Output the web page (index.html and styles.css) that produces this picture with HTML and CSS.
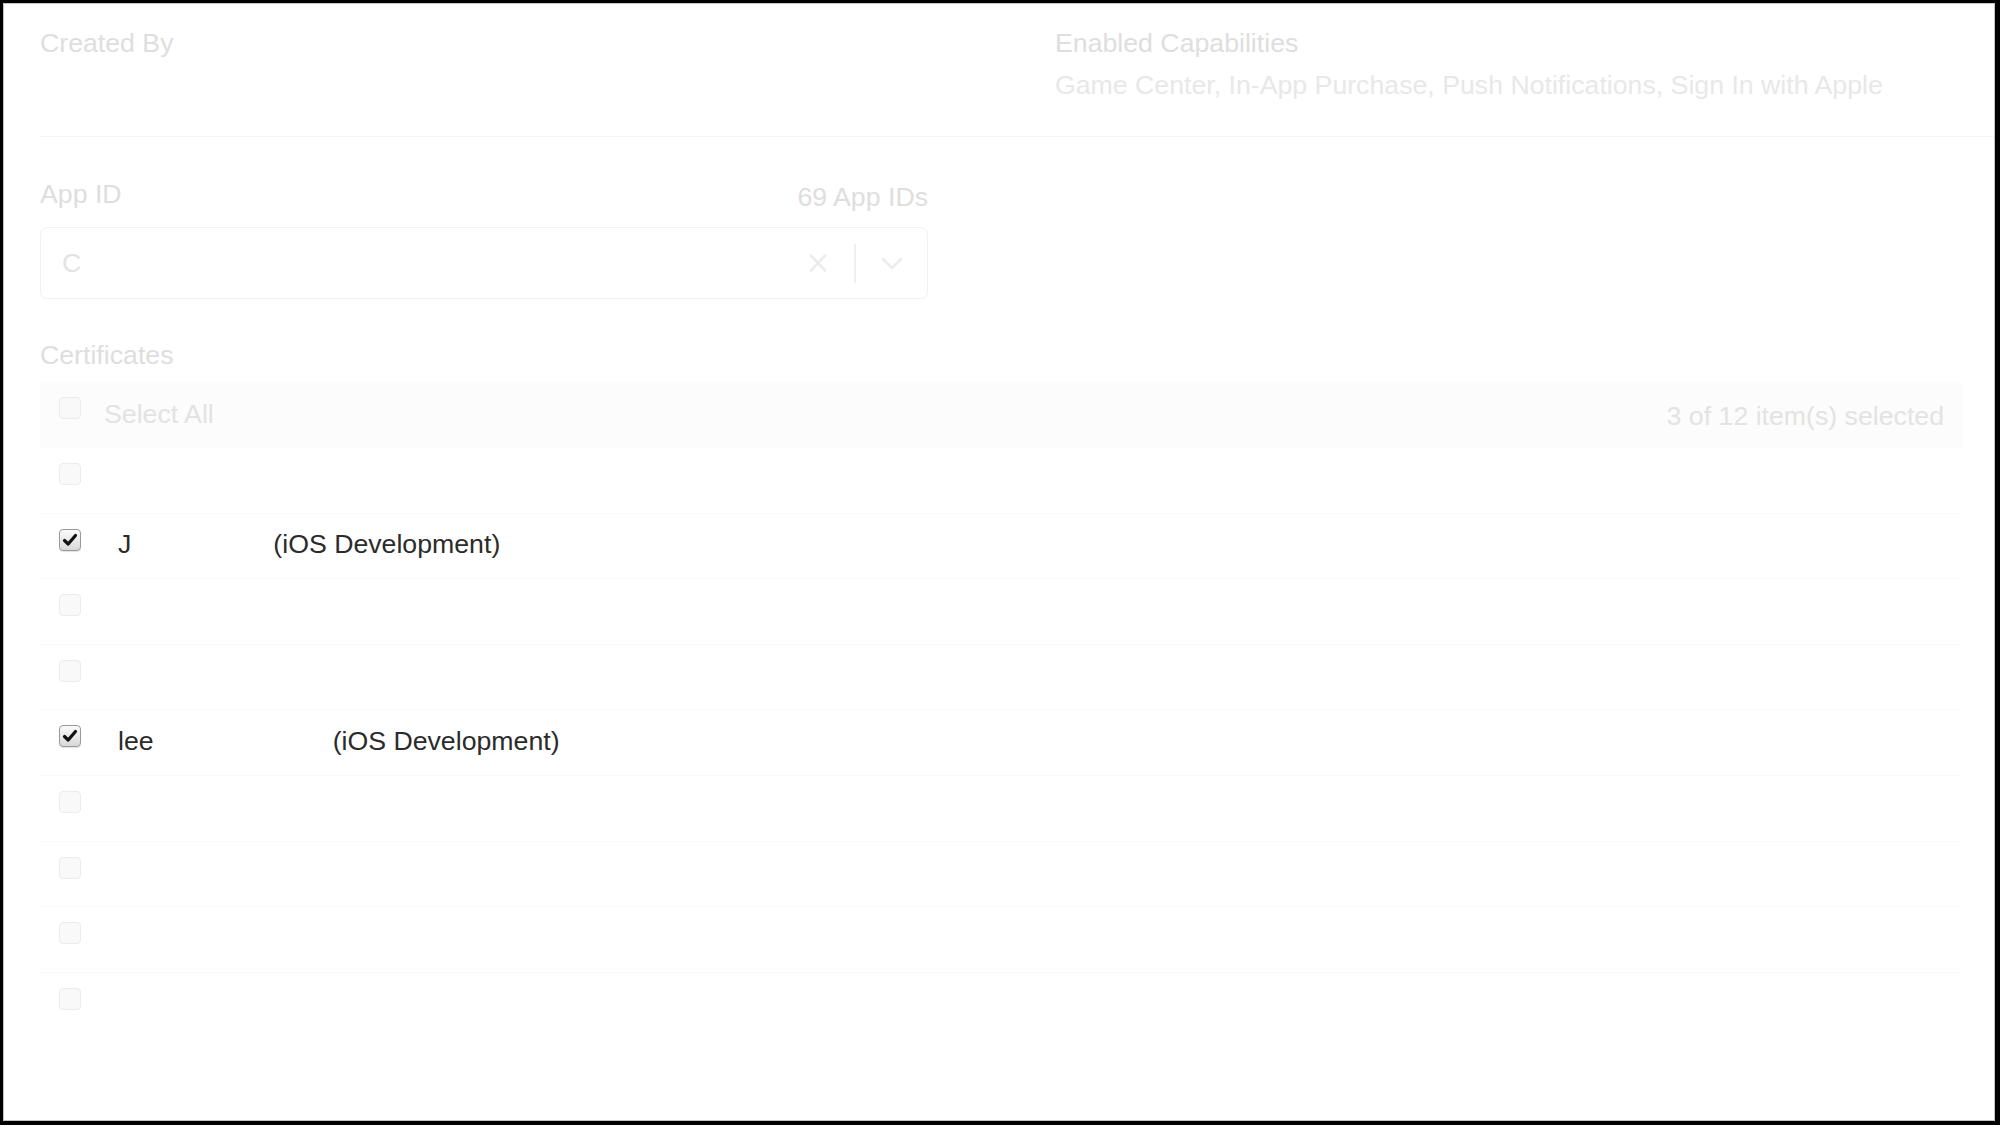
FILE: index.html
```html
<!DOCTYPE html>
<html lang="en">
<head>
  <meta charset="UTF-8" />
  <meta name="viewport" content="width=device-width, initial-scale=1.0" />
  <title>Edit Provisioning Profile</title>
  <link rel="stylesheet" href="styles.css">
</head>
<body>
  <div class="frame">
    <div class="details">
      <div class="field">
        <div class="field-label">Created By</div>
        <div class="field-value"></div>
      </div>
      <div class="field">
        <div class="field-label">Enabled Capabilities</div>
        <div class="field-value">Game Center, In-App Purchase, Push Notifications, Sign In with Apple</div>
      </div>
    </div>

    <div class="form">
      <div class="form-group app-id">
        <div class="label-row">
          <span class="field-label">App ID</span>
          <span class="count">69 App IDs</span>
        </div>
        <div class="select">
          <span class="select-value">C</span>
          <div class="select-actions">
            <svg class="clear" width="18" height="20" viewBox="0 0 18 20">
              <path d="M2 2.5 L16 17.5 M16 2.5 L2 17.5" stroke="#ececec" stroke-width="2.6" stroke-linecap="round" fill="none"/>
            </svg>
            <span class="sep"></span>
            <svg class="arrow" width="22" height="13" viewBox="0 0 22 13">
              <path d="M2 2 L11 11 L20 2" stroke="#ededed" stroke-width="2.8" stroke-linecap="round" stroke-linejoin="round" fill="none"/>
            </svg>
          </div>
        </div>
      </div>

      <div class="form-group">
        <div class="field-label">Certificates</div>
        <div class="cert-list">
          <div class="cert-header">
            <span class="box"></span>
            <span class="select-all">Select All</span>
            <span class="selected-count">3 of 12 item(s) selected</span>
          </div>
          <div class="cert-row"><span class="box"></span></div>
          <div class="cert-row">
            <span class="box checked">
              <svg width="16" height="14" viewBox="0 0 16 14"><path d="M2.5 7.5 L6.2 11 L13.5 2.5" stroke="#111" stroke-width="3.2" stroke-linecap="round" stroke-linejoin="round" fill="none"/></svg>
            </span>
            <span class="cert-name">J</span>
            <span class="cert-type short">(iOS Development)</span>
          </div>
          <div class="cert-row"><span class="box"></span></div>
          <div class="cert-row"><span class="box"></span></div>
          <div class="cert-row">
            <span class="box checked">
              <svg width="16" height="14" viewBox="0 0 16 14"><path d="M2.5 7.5 L6.2 11 L13.5 2.5" stroke="#111" stroke-width="3.2" stroke-linecap="round" stroke-linejoin="round" fill="none"/></svg>
            </span>
            <span class="cert-name">lee</span>
            <span class="cert-type long">(iOS Development)</span>
          </div>
          <div class="cert-row"><span class="box"></span></div>
          <div class="cert-row"><span class="box"></span></div>
          <div class="cert-row"><span class="box"></span></div>
          <div class="cert-row"><span class="box"></span></div>
        </div>
      </div>
    </div>
  </div>
</body>
</html>
```

FILE: styles.css
```css
:root {
  --label: #dedede;
  --muted: #e8e8e8;
  --text: #2b2b2b;
  --line: #f9f9f9;
}

* {
  box-sizing: border-box;
}

body {
  margin: 0;
  padding: 0;
  background: #000;
  font-family: 'Liberation Sans', Arial, sans-serif;
  font-size: 26.7px;
  line-height: 32px;
  color: var(--text);
}

.frame {
  margin: 3px 5px 4px 3px;
  height: 1118px;
  background: #fff;
  border: 1px solid #c4c4c4;
  overflow: hidden;
}

.details {
  margin-left: 36px;
  padding: 22.5px 0 35.5px;
  border-bottom: 1px solid #f5f5f5;
  display: grid;
  grid-template-columns: 1015px 1fr;
}

.field-label {
  color: var(--label);
}

.field-value {
  margin-top: 10px;
  min-height: 32px;
  color: var(--muted);
}

.form {
  padding-left: 36px;
}

.form-group {
  margin-top: 40px;
}

.app-id {
  margin-top: 41px;
  width: 888px;
}

.label-row {
  height: 32px;
  display: flex;
  justify-content: space-between;
  align-items: flex-start;
}

.count {
  margin-top: 3px;
  color: var(--label);
}

.select {
  margin-top: 17px;
  height: 72px;
  border: 1px solid #f2f2f2;
  border-radius: 7px;
  display: flex;
  align-items: center;
  padding: 0 24px 0 21px;
}

.select-value {
  flex: 1;
  color: #e3e3e3;
}

.select-actions {
  display: flex;
  align-items: center;
}

.clear {
  display: block;
  margin-right: 27px;
}

.sep {
  width: 2px;
  height: 39px;
  background: #f0f0f0;
  margin-right: 25px;
}

.arrow {
  display: block;
}

.cert-list {
  margin-top: 11px;
  width: 1922px;
}

.cert-header {
  height: 66px;
  background: #fcfcfc;
  display: flex;
  align-items: flex-start;
  padding: 0 18px 0 19px;
}

.box {
  flex: none;
  width: 22px;
  height: 22px;
  margin-top: 15px;
  border: 1px solid #ececec;
  border-radius: 4px;
  background: #f9f9f9;
  display: flex;
  align-items: center;
  justify-content: center;
}

.box.checked {
  border-color: #9a9a9a;
  background: linear-gradient(#fbfbfb, #d8d8d8);
  box-shadow: 0 1px 1px rgba(0,0,0,0.12);
}

.box svg {
  display: block;
}

.select-all {
  margin: 15.7px 0 0 23px;
  color: #e3e3e3;
}

.selected-count {
  margin: 17.7px 0 0 auto;
  color: #e3e3e3;
}

.cert-row {
  height: 65.6px;
  border-bottom: 1px solid var(--line);
  display: flex;
  align-items: flex-start;
  padding-left: 19px;
}

.cert-row:last-child {
  border-bottom: none;
}

.cert-name {
  margin: 14.7px 0 0 37px;
}

.cert-type {
  margin-top: 14.7px;
}

.cert-type.short {
  margin-left: 142px;
}

.cert-type.long {
  margin-left: 179px;
}
```
